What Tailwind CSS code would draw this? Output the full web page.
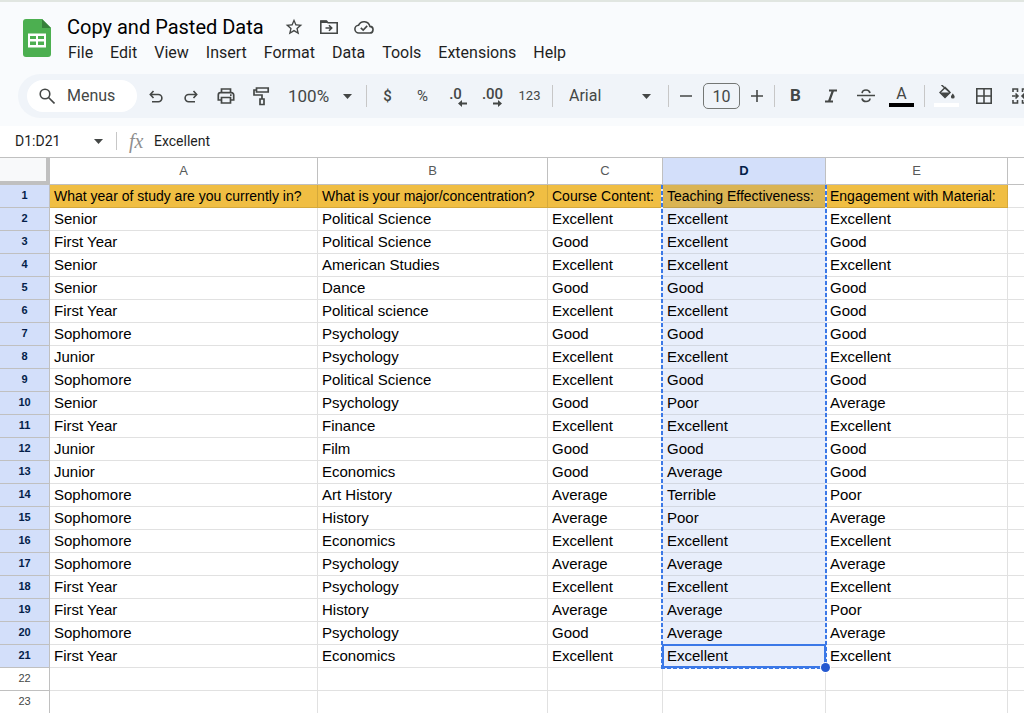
<!DOCTYPE html>
<html lang="en">
<head>
    <meta charset="UTF-8">
    <meta name="viewport" content="width=device-width, initial-scale=1.0">
    <title>Copy and Pasted Data</title>
    <script src="https://cdn.jsdelivr.net/npm/@tailwindcss/browser@4"></script>
</head>
<body class="bg-white h-screen overflow-hidden font-['Roboto',sans-serif] text-[#1f1f1f]">
<header class="bg-[#f9fbfd] border-t-2 border-[#e1e6e1] pb-2">
    <!-- title and menus -->
    <div class="flex pt-[13px] pl-[23px]">
        <svg class="w-7 h-[38px] mt-1 shrink-0" viewBox="0 0 28 38">
            <path fill="#4caf50" d="M3 0h16l9 9v26a3 3 0 0 1-3 3H3a3 3 0 0 1-3-3V3a3 3 0 0 1 3-3z"/>
            <path fill="#36803a" d="M19 0l9 9h-9z"/>
            <path fill="#fff" fill-rule="evenodd" d="M5 14.500h18v14H5zM7 17h6v3H7zM15 17h6v3h-6zM7 22.500h6v3.500H7zM15 22.500h6v3.500h-6z"/>
        </svg>
        <div class="ml-4">
            <div class="flex items-center h-6">
                <h1 class="text-xl leading-6 text-black whitespace-nowrap">Copy and Pasted Data</h1>
                <div class="flex items-center gap-[15px] ml-5 text-[#444746]">
                    <button aria-label="Star"><svg class="w-5 h-5" viewBox="0 0 24 24" fill="currentColor"><path d="M22 9.240l-7.190-.62L12 2 9.190 8.630 2 9.240l5.460 4.730L5.820 21 12 17.270 18.180 21l-1.630-7.030L22 9.240zM12 15.400l-3.760 2.270 1-4.280-3.320-2.880 4.380-.38L12 6.100l1.710 4.040 4.380.38-3.320 2.880 1 4.280L12 15.400z"/></svg></button>
                    <button aria-label="Move"><svg class="w-5 h-5" viewBox="0 0 20 20" fill="none" stroke="currentColor" stroke-width="1.600"><path d="M1.800 16.200V4h5.400l1.800 1.800h9.200v10.400z"/><path d="M1.800 4.800h6.500" stroke-width="2.400"/><path d="M6.500 11h6M10 8.300l2.700 2.700-2.700 2.700"/></svg></button>
                    <button aria-label="Document status"><svg class="w-5 h-5" viewBox="0 0 20 20" fill="none" stroke="currentColor" stroke-width="1.600"><path d="M5 16h10.500a3.300 3.300 0 0 0 .4-6.600A6 6 0 0 0 4.600 8.200 3.900 3.900 0 0 0 5 16z"/><path d="M6.800 10.800l2.400 2.300 4-4.200"/></svg></button>
                </div>
            </div>
            <nav class="flex gap-[17px] mt-[2px] pl-px text-base leading-6">
                <button>File</button>
                <button>Edit</button>
                <button>View</button>
                <button>Insert</button>
                <button>Format</button>
                <button>Data</button>
                <button>Tools</button>
                <button>Extensions</button>
                <button>Help</button>
            </nav>
        </div>
    </div>

    <!-- toolbar -->
    <div class="ml-[18px] mt-[9px] h-11 pl-[9px] rounded-l-full bg-[#f0f4f9] flex items-center overflow-hidden text-[#444746] [&>*]:shrink-0">
        <label class="flex items-center h-8 w-[110px] pl-3 bg-white rounded-full">
            <svg class="w-4 h-4 shrink-0" viewBox="0 0 16 16" fill="none" stroke="currentColor" stroke-width="1.600"><circle cx="6" cy="6" r="4.800"/><path d="M9.500 9.500l6 6"/></svg>
            <input type="text" aria-label="Search the menus" placeholder="Menus" class="w-16 ml-3 text-base outline-none placeholder:text-[#444746]">
        </label>
        <button aria-label="Undo" class="ml-px w-[35px] flex justify-center"><svg class="w-4 h-4" viewBox="0 0 16 16" fill="none" stroke="currentColor" stroke-width="1.600"><path d="M5.500 3L2.300 6.500l3.200 3.500M2.500 6.500h7.800a3.600 3.600 0 0 1 0 7.200H4"/></svg></button>
        <button aria-label="Redo" class="w-[35px] flex justify-center"><svg class="w-4 h-4" viewBox="0 0 16 16" fill="none" stroke="currentColor" stroke-width="1.600"><path d="M10.500 3l3.200 3.500-3.200 3.500M13.500 6.500H5.700a3.600 3.600 0 0 0 0 7.200H12"/></svg></button>
        <button aria-label="Print" class="w-[35px] flex justify-center"><svg class="w-[18px] h-[18px]" viewBox="0 0 18 18" fill="none" stroke="currentColor" stroke-width="1.700"><path d="M4.500 5.500V2h9v3.500M4.500 13H1.300V8a2.300 2.300 0 0 1 2.300-2.300h10.800A2.300 2.300 0 0 1 16.700 8v5h-3.200M4.500 10.500h9V16h-9z"/><path d="M13 8.200h1.600"/></svg></button>
        <button aria-label="Paint format" class="w-[35px] flex justify-center"><svg class="w-[18px] h-5" viewBox="0 0 18 20" fill="none" stroke="currentColor" stroke-width="1.700"><path d="M4.500 2h11.700v4H4.500zM4.500 4H2v5h8v4M8 13h4v5.500H8z"/></svg></button>
        <div class="relative ml-px w-[87px]">
            <select aria-label="Zoom" class="appearance-none w-full h-8 pl-[9px] pt-px text-[17px] outline-none"><option>100%</option></select>
            <svg class="absolute right-[14px] top-[14px] w-[9px] h-[5px] pointer-events-none" viewBox="0 0 9 5" fill="currentColor"><path d="M0 0h9L4.500 5z"/></svg>
        </div>
        <span class="w-px h-[22px] bg-[#c7c7c7]"></span>
        <button aria-label="Format as currency" class="ml-[3px] w-[35px] text-[15px] font-medium">$</button>
        <button aria-label="Format as percent" class="w-[35px] text-[15px]">%</button>
        <button aria-label="Decrease decimal places" class="w-[35px] h-6 flex justify-center relative text-[15px] font-medium leading-5"><span class="-ml-1">.0</span>
            <svg class="absolute right-2 bottom-px w-[9px] h-[7px]" viewBox="0 0 9 7" fill="currentColor"><path d="M0 3.500L4 0v2.500h5v2H4V7z"/></svg>
        </button>
        <button aria-label="Increase decimal places" class="w-[35px] h-6 flex justify-center relative text-[15px] font-medium leading-5"><span>.00</span>
            <svg class="absolute right-2 bottom-px w-[9px] h-[7px]" viewBox="0 0 9 7" fill="currentColor"><path d="M9 3.500L5 0v2.500H0v2h5V7z"/></svg>
        </button>
        <button aria-label="More formats" class="w-[39px] text-[13px]">123</button>
        <span class="ml-[3px] w-px h-[22px] bg-[#c7c7c7]"></span>
        <div class="relative w-[115px]">
            <select aria-label="Font" class="appearance-none w-full h-8 pl-4 text-base outline-none"><option>Arial</option></select>
            <svg class="absolute right-[17px] top-[14px] w-[9px] h-[5px] pointer-events-none" viewBox="0 0 9 5" fill="currentColor"><path d="M0 0h9L4.500 5z"/></svg>
        </div>
        <span class="w-px h-[22px] bg-[#c7c7c7]"></span>
        <button aria-label="Decrease font size" class="w-[34px] flex justify-center"><svg class="w-3 h-3" viewBox="0 0 12 12" stroke="currentColor" stroke-width="1.600"><path d="M0 6h12"/></svg></button>
        <input type="text" aria-label="Font size" value="10" class="w-[37px] h-[26px] border border-[#747775] rounded-[5px] text-center text-base outline-none">
        <button aria-label="Increase font size" class="w-[34px] flex justify-center"><svg class="w-3 h-3" viewBox="0 0 12 12" stroke="currentColor" stroke-width="1.600"><path d="M0 6h12M6 0v12"/></svg></button>
        <span class="w-px h-[22px] bg-[#c7c7c7]"></span>
        <button aria-label="Bold" class="ml-[3px] w-[35px] text-[17px] font-bold">B</button>
        <button aria-label="Italic" class="w-[35px] flex justify-center"><svg class="w-3 h-[14px]" viewBox="0 0 12 14" fill="none" stroke="currentColor" stroke-width="2.200"><path d="M4 1.500h8M0 12.500h8M8 1.500l-4 11"/></svg></button>
        <button aria-label="Strikethrough" class="w-[35px] flex justify-center"><svg class="w-[18px] h-4" viewBox="0 0 18 16" fill="none" stroke="currentColor" stroke-width="1.700"><path d="M0 7.500h18"/><path d="M13 5C12.500 3 11 2 9 2S5.300 3 5.100 5.200M5 10.500c.4 2 2 3 4 3s3.800-1 4-3"/></svg></button>
        <button aria-label="Text color" class="w-[37px] flex flex-col items-center"><span class="text-base leading-4">A</span><span class="w-[25px] h-1 mt-px bg-black"></span></button>
        <span class="ml-1 w-px h-[22px] bg-[#c7c7c7]"></span>
        <button aria-label="Fill color" class="ml-[3px] w-[37px] flex flex-col items-center">
            <svg class="w-4 h-4" viewBox="0 0 16 16"><path d="M2.500 0l8.500 7.500L6 12.500 1 7.500 6.200 2.500 10.800 7" fill="none" stroke="#444746" stroke-width="1.500"/><path d="M1 7.500h10l-5 5z" fill="#444746"/><path d="M13.800 8.500s-1.900 2-1.900 3.200a1.900 1.900 0 0 0 3.800 0c0-1.200-1.900-3.200-1.900-3.200z" fill="#444746"/></svg>
            <span class="w-[25px] h-1 mt-[2px] bg-white"></span>
        </button>
        <button aria-label="Borders" class="w-[37px] flex justify-center"><svg class="w-4 h-4" viewBox="0 0 16 16" fill="none" stroke="currentColor" stroke-width="1.600"><path d="M.8.8h14.400v14.400H.8zM8 .8v14.400M.8 8h14.400"/></svg></button>
        <button aria-label="Merge cells" class="w-[35px] flex justify-center"><svg class="w-4 h-4" viewBox="0 0 16 16" fill="none" stroke="currentColor" stroke-width="1.600"><path d="M1 4V1h4.500v3M1 12v3h4.500v-3M10.500 4V1H15v3M10.500 12v3H15v-3M0 8h6M3.500 5.500L6 8l-2.500 2.500M16 8h-6M12.500 5.500L10 8l2.500 2.500"/></svg></button>
    </div>
</header>

<!-- name box and formula bar -->
<div class="flex items-center h-[31px] pl-[15px] pb-px text-sm">
    <input type="text" aria-label="Name box" value="D1:D21" class="w-[78px] text-sm outline-none">
    <button aria-label="Named ranges" class="w-[11px] flex justify-center"><svg class="w-[9px] h-[5px]" viewBox="0 0 9 5" fill="#444746"><path d="M0 0h9L4.500 5z"/></svg></button>
    <span class="ml-3 w-px h-[18px] bg-[#c7c7c7]"></span>
    <span class="ml-3 w-[25px] font-['Liberation_Serif',serif] italic text-xl leading-5 text-[#8f8f8f]">fx</span>
    <input type="text" aria-label="Formula" value="Excellent" class="grow text-sm outline-none">
</div>

<table class="w-full table-fixed border-separate border-spacing-0 border-t border-[#c0c0c0] font-['Liberation_Sans',Arial,sans-serif] text-[15px] leading-[22px] text-black whitespace-nowrap">
    <colgroup>
        <col class="w-[50px]">
        <col class="w-[268px]">
        <col class="w-[230px]">
        <col class="w-[115px]">
        <col class="w-[163px]">
        <col class="w-[182px]">
        <col>
    </colgroup>
    <thead>
        <tr class="h-[27px] text-[13px] text-[#575a5a]">
            <td class="p-0 bg-[#f8f9fa] border-r-4 border-b-4 border-[#c0c0c0]"></td>
            <th scope="col" class="p-0 font-normal border-r border-b border-[#c0c0c0]">A</th>
            <th scope="col" class="p-0 font-normal border-r border-b border-[#c0c0c0]">B</th>
            <th scope="col" class="p-0 font-normal border-r border-b border-[#c0c0c0]">C</th>
            <th scope="col" class="p-0 font-bold border-r border-b border-[#c0c0c0] bg-[#d3dffa] text-[#041e49]">D</th>
            <th scope="col" class="p-0 font-normal border-r border-b border-[#c0c0c0]">E</th>
            <td class="p-0 border-b border-[#c0c0c0]"></td>
        </tr>
    </thead>
    <tbody id="rows"></tbody>
</table>

<script>
const questions = ['What year of study are you currently in?', 'What is your major/concentration?', 'Course Content:', 'Teaching Effectiveness:', 'Engagement with Material:'];
const responses = [
    ['Senior', 'Political Science', 'Excellent', 'Excellent', 'Excellent'],
    ['First Year', 'Political Science', 'Good', 'Excellent', 'Good'],
    ['Senior', 'American Studies', 'Excellent', 'Excellent', 'Excellent'],
    ['Senior', 'Dance', 'Good', 'Good', 'Good'],
    ['First Year', 'Political science', 'Excellent', 'Excellent', 'Good'],
    ['Sophomore', 'Psychology', 'Good', 'Good', 'Good'],
    ['Junior', 'Psychology', 'Excellent', 'Excellent', 'Excellent'],
    ['Sophomore', 'Political Science', 'Excellent', 'Good', 'Good'],
    ['Senior', 'Psychology', 'Good', 'Poor', 'Average'],
    ['First Year', 'Finance', 'Excellent', 'Excellent', 'Excellent'],
    ['Junior', 'Film', 'Good', 'Good', 'Good'],
    ['Junior', 'Economics', 'Good', 'Average', 'Good'],
    ['Sophomore', 'Art History', 'Average', 'Terrible', 'Poor'],
    ['Sophomore', 'History', 'Average', 'Poor', 'Average'],
    ['Sophomore', 'Economics', 'Excellent', 'Excellent', 'Excellent'],
    ['Sophomore', 'Psychology', 'Average', 'Average', 'Average'],
    ['First Year', 'Psychology', 'Excellent', 'Excellent', 'Excellent'],
    ['First Year', 'History', 'Average', 'Average', 'Poor'],
    ['Sophomore', 'Psychology', 'Good', 'Average', 'Average'],
    ['First Year', 'Economics', 'Excellent', 'Excellent', 'Excellent']
];
const sheet = [questions, ...responses, ['', '', '', '', ''], ['', '', '', '', '']];

// copied range outline, anchored in D1 and 21 rows tall
const copyOutline = `<span class="absolute z-10 -left-[2px] top-0 w-[166px] h-[484px] pointer-events-none">
    <span class="absolute left-0 inset-y-0 w-[2px] bg-[repeating-linear-gradient(to_bottom,#3b78e7_0_4px,#e8eefb_4px_6px)]"></span>
    <span class="absolute right-0 inset-y-0 w-[2px] bg-[repeating-linear-gradient(to_bottom,#3b78e7_0_4px,#e8eefb_4px_6px)]"></span>
    <span class="absolute bottom-0 inset-x-0 h-[2px] bg-[repeating-linear-gradient(to_right,#3b78e7_0_4px,#e8eefb_4px_6px)]"></span>
</span>`;
// active cell frame with the fill handle
const activeFrame = '<span class="absolute z-20 -left-px -top-px w-[164px] h-6 border-2 border-[#3b78e7] pointer-events-none"></span><span class="absolute z-30 -right-[5px] -bottom-[5px] w-[9px] h-[9px] rounded-full bg-[#2458d0] ring-1 ring-white"></span>';

document.getElementById('rows').innerHTML = sheet.map((row, r) => {
    const selected = r < 21;
    const cells = row.map((text, c) => {
        let look = 'border-[#e1e1e1] text-[15px] leading-[22px]';
        if (r === 0) look = c === 3 ? 'bg-[#dab453] border-[#c0a04c] text-sm leading-[22px]' : 'bg-[#f0be43] border-[#d5a93b] text-sm leading-[22px]';
        else if (c === 3 && selected) look = 'bg-[#e8eefb] border-[#d3d8e2] text-[15px] leading-[22px]';
        let extra = '';
        if (c === 3 && r === 0) extra = copyOutline;
        if (c === 3 && r === 20) extra = activeFrame;
        return `<td class="relative p-0 pl-1 border-r border-b ${look}">${text}${extra}</td>`;
    }).join('');
    const head = selected ? 'bg-[#d3dffa] text-[#041e49] font-bold' : 'text-[#444746] font-normal';
    return `<tr class="h-[23px]">
        <th scope="row" class="p-0 text-[11px] leading-[20px] align-top border-r border-b border-[#c0c0c0] ${head}">${r + 1}</th>
        ${cells}
        <td class="p-0 border-b border-[#e1e1e1]"></td>
    </tr>`;
}).join('');
</script>
</body>
</html>
